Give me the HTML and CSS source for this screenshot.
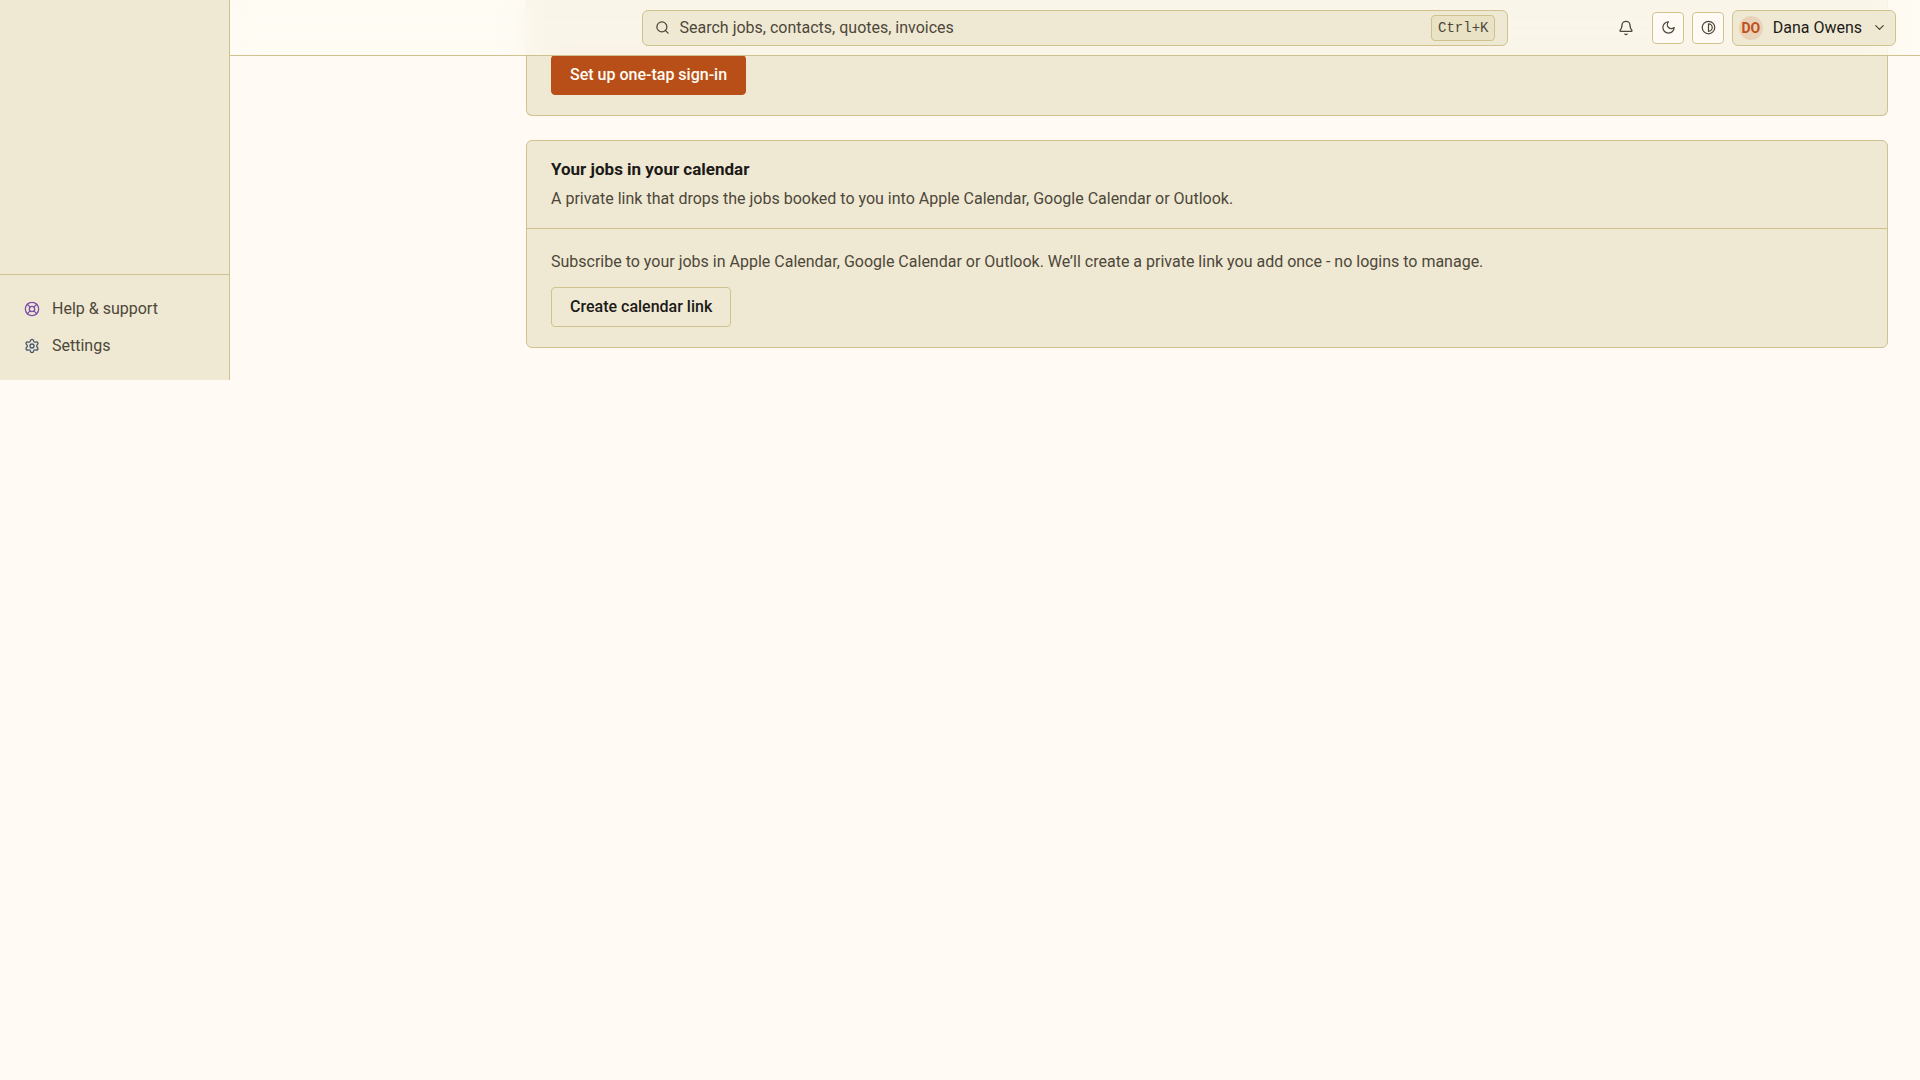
FILE: index.html
```html
<!DOCTYPE html>
<html lang="en">
<head>
  <meta charset="utf-8">
  <title>Settings</title>
  <link rel="stylesheet" href="styles.css">
</head>
<body>
  <header class="topbar">
    <label class="search">
      <svg class="icon small" viewBox="0 0 24 24"><circle cx="11" cy="11" r="8"/><path d="m21 21-4.3-4.3"/></svg>
      <input type="text" placeholder="Search jobs, contacts, quotes, invoices" aria-label="Search">
      <kbd>Ctrl+K</kbd>
    </label>
    <div class="actions">
      <button class="icon-button plain" aria-label="Notifications">
        <svg class="icon" viewBox="0 0 24 24"><path d="M10.268 21a2 2 0 0 0 3.464 0"/><path d="M3.262 15.326A1 1 0 0 0 4 17h16a1 1 0 0 0 .74-1.673C19.41 13.956 18 12.499 18 8A6 6 0 0 0 6 8c0 4.499-1.411 5.956-2.738 7.326"/></svg>
      </button>
      <button class="icon-button" aria-label="Dark mode">
        <svg class="icon small" viewBox="0 0 24 24"><path d="M12 3a6 6 0 0 0 9 9 9 9 0 1 1-9-9Z"/></svg>
      </button>
      <button class="icon-button" aria-label="Contrast">
        <svg class="icon small" viewBox="0 0 24 24"><circle cx="12" cy="12" r="10"/><path d="M12 18a6 6 0 0 0 0-12v12z"/></svg>
      </button>
      <button class="profile">
        <span class="avatar">DO</span>
        <span class="name">Dana Owens</span>
        <svg class="icon small" viewBox="0 0 24 24"><path d="m6 9 6 6 6-6"/></svg>
      </button>
    </div>
  </header>

  <div class="layout">
    <aside class="sidebar">
      <nav class="sidebar-footer">
        <a href="#">
          <svg class="icon help" viewBox="0 0 24 24"><circle cx="12" cy="12" r="10"/><path d="m4.93 4.93 4.24 4.24M14.83 9.17l4.24-4.24M14.83 14.83l4.24 4.24M9.17 14.83l-4.24 4.24"/><circle cx="12" cy="12" r="4"/></svg>
          Help &amp; support
        </a>
        <a href="#">
          <svg class="icon gear" viewBox="0 0 24 24"><path d="M9.671 4.136a2.34 2.34 0 0 1 4.659 0 2.34 2.34 0 0 0 3.319 1.915 2.34 2.34 0 0 1 2.33 4.033 2.34 2.34 0 0 0 0 3.831 2.34 2.34 0 0 1-2.33 4.033 2.34 2.34 0 0 0-3.319 1.915 2.34 2.34 0 0 1-4.659 0 2.34 2.34 0 0 0-3.32-1.915 2.34 2.34 0 0 1-2.33-4.033 2.34 2.34 0 0 0 0-3.831A2.34 2.34 0 0 1 6.35 6.051a2.34 2.34 0 0 0 3.319-1.915"/><circle cx="12" cy="12" r="3"/></svg>
          Settings
        </a>
      </nav>
    </aside>

    <main class="content">
      <section class="card signin">
        <div class="card-body">
          <button class="btn primary">Set up one-tap sign-in</button>
        </div>
      </section>

      <section class="card">
        <div class="card-header">
          <h2>Your jobs in your calendar</h2>
          <p>A private link that drops the jobs booked to you into Apple Calendar, Google Calendar or Outlook.</p>
        </div>
        <div class="card-body">
          <p>Subscribe to your jobs in Apple Calendar, Google Calendar or Outlook. We’ll create a private link you add once - no logins to manage.</p>
          <button class="btn">Create calendar link</button>
        </div>
      </section>
    </main>
  </div>
</body>
</html>
```
FILE: styles.css
```css
:root {
  --bg: #fffbf4;
  --panel: #efe9d4;
  --line: #cfc28f;
  --text: #1c1a17;
  --muted: #4d4739;
  --accent: #b84f18;
}

* {
  box-sizing: border-box;
}

body {
  margin: 0;
  background: var(--bg);
  color: var(--text);
  font-family: Roboto, "Liberation Sans", sans-serif;
  font-size: 16px;
  line-height: 26px;
}

button, input {
  font: inherit;
  color: inherit;
}

button {
  cursor: pointer;
}

h2, p {
  margin: 0;
}

.icon {
  width: 16px;
  height: 16px;
  flex: none;
  fill: none;
  stroke: currentColor;
  stroke-width: 2;
  stroke-linecap: round;
  stroke-linejoin: round;
}

.icon.small {
  width: 15px;
  height: 15px;
}

/* top bar */
.topbar {
  position: fixed;
  top: 0;
  left: 230px;
  right: 0;
  z-index: 10;
  display: grid;
  grid-template-columns: 3fr 7fr 3fr;
  gap: 16px;
  align-items: center;
  height: 56px;
  padding: 0 24px;
  border-bottom: 1px solid var(--line);
  background: rgba(255, 252, 245, 0.65);
  backdrop-filter: blur(12px);
}

.search {
  grid-column: 2;
  display: flex;
  align-items: center;
  gap: 10px;
  height: 36px;
  padding: 0 12px;
  border: 1px solid var(--line);
  border-radius: 6px;
  background: var(--panel);
  color: var(--muted);
}

.search input {
  flex: 1;
  min-width: 0;
  padding: 0;
  border: 0;
  outline: 0;
  background: none;
}

.search input::placeholder {
  color: var(--muted);
  opacity: 1;
}

kbd {
  padding: 0 6px;
  border: 1px solid var(--line);
  border-radius: 4px;
  background: #e9e2c5;
  font-family: "Liberation Mono", monospace;
  font-size: 14px;
  line-height: 24px;
}

.actions {
  display: flex;
  align-items: center;
  justify-content: flex-end;
  gap: 8px;
}

.icon-button {
  display: flex;
  align-items: center;
  justify-content: center;
  width: 32px;
  height: 32px;
  padding: 0;
  border: 1px solid var(--line);
  border-radius: 4px;
  background: var(--bg);
  color: var(--muted);
}

.icon-button.plain {
  margin-right: 2px;
  border-color: transparent;
  background: none;
}

.profile {
  display: flex;
  align-items: center;
  gap: 10px;
  width: 164px;
  height: 36px;
  padding: 0 8px 0 6px;
  border: 1px solid var(--line);
  border-radius: 6px;
  background: var(--panel);
}

.profile .icon {
  color: var(--muted);
}

.avatar {
  width: 24px;
  height: 24px;
  border-radius: 50%;
  background: #e8d3b9;
  color: #c04f1c;
  font-size: 14px;
  font-weight: 700;
  line-height: 24px;
}

.name {
  flex: 1;
  text-align: left;
  white-space: nowrap;
}

/* page */
.layout {
  display: grid;
  grid-template-columns: 230px 1fr;
}

.sidebar {
  display: flex;
  flex-direction: column;
  justify-content: flex-end;
  border-right: 1px solid var(--line);
  background: var(--panel);
}

.sidebar-footer {
  display: grid;
  gap: 1px;
  padding: 16px 12px;
  border-top: 1px solid var(--line);
}

.sidebar-footer a {
  display: flex;
  align-items: center;
  gap: 12px;
  height: 36px;
  padding: 0 12px;
  color: var(--muted);
  text-decoration: none;
}

.help {
  color: #7e4fa8;
}

.gear {
  color: #475569;
}

.content {
  display: grid;
  gap: 24px;
  padding: 0 32px 32px 296px;
}

.card {
  border: 1px solid var(--line);
  border-radius: 6px;
  background: var(--panel);
}

/* runs up behind the top bar */
.signin {
  padding-top: 35px;
  border-top: 0;
  border-radius: 0 0 6px 6px;
}

.card-header {
  padding: 16px 24px;
  border-bottom: 1px solid var(--line);
}

.card-header h2 {
  margin-bottom: 4px;
  font-size: 17px;
  font-weight: 700;
  line-height: 25px;
}

.card p {
  color: var(--muted);
}

.card-body {
  display: flex;
  flex-direction: column;
  align-items: flex-start;
  gap: 12px;
  padding: 20px 24px;
}

.btn {
  height: 40px;
  padding: 0 18px;
  border: 1px solid var(--line);
  border-radius: 4px;
  background: none;
  font-weight: 500;
}

.btn.primary {
  border-color: var(--accent);
  background: var(--accent);
  color: #fffcf5;
}
```
